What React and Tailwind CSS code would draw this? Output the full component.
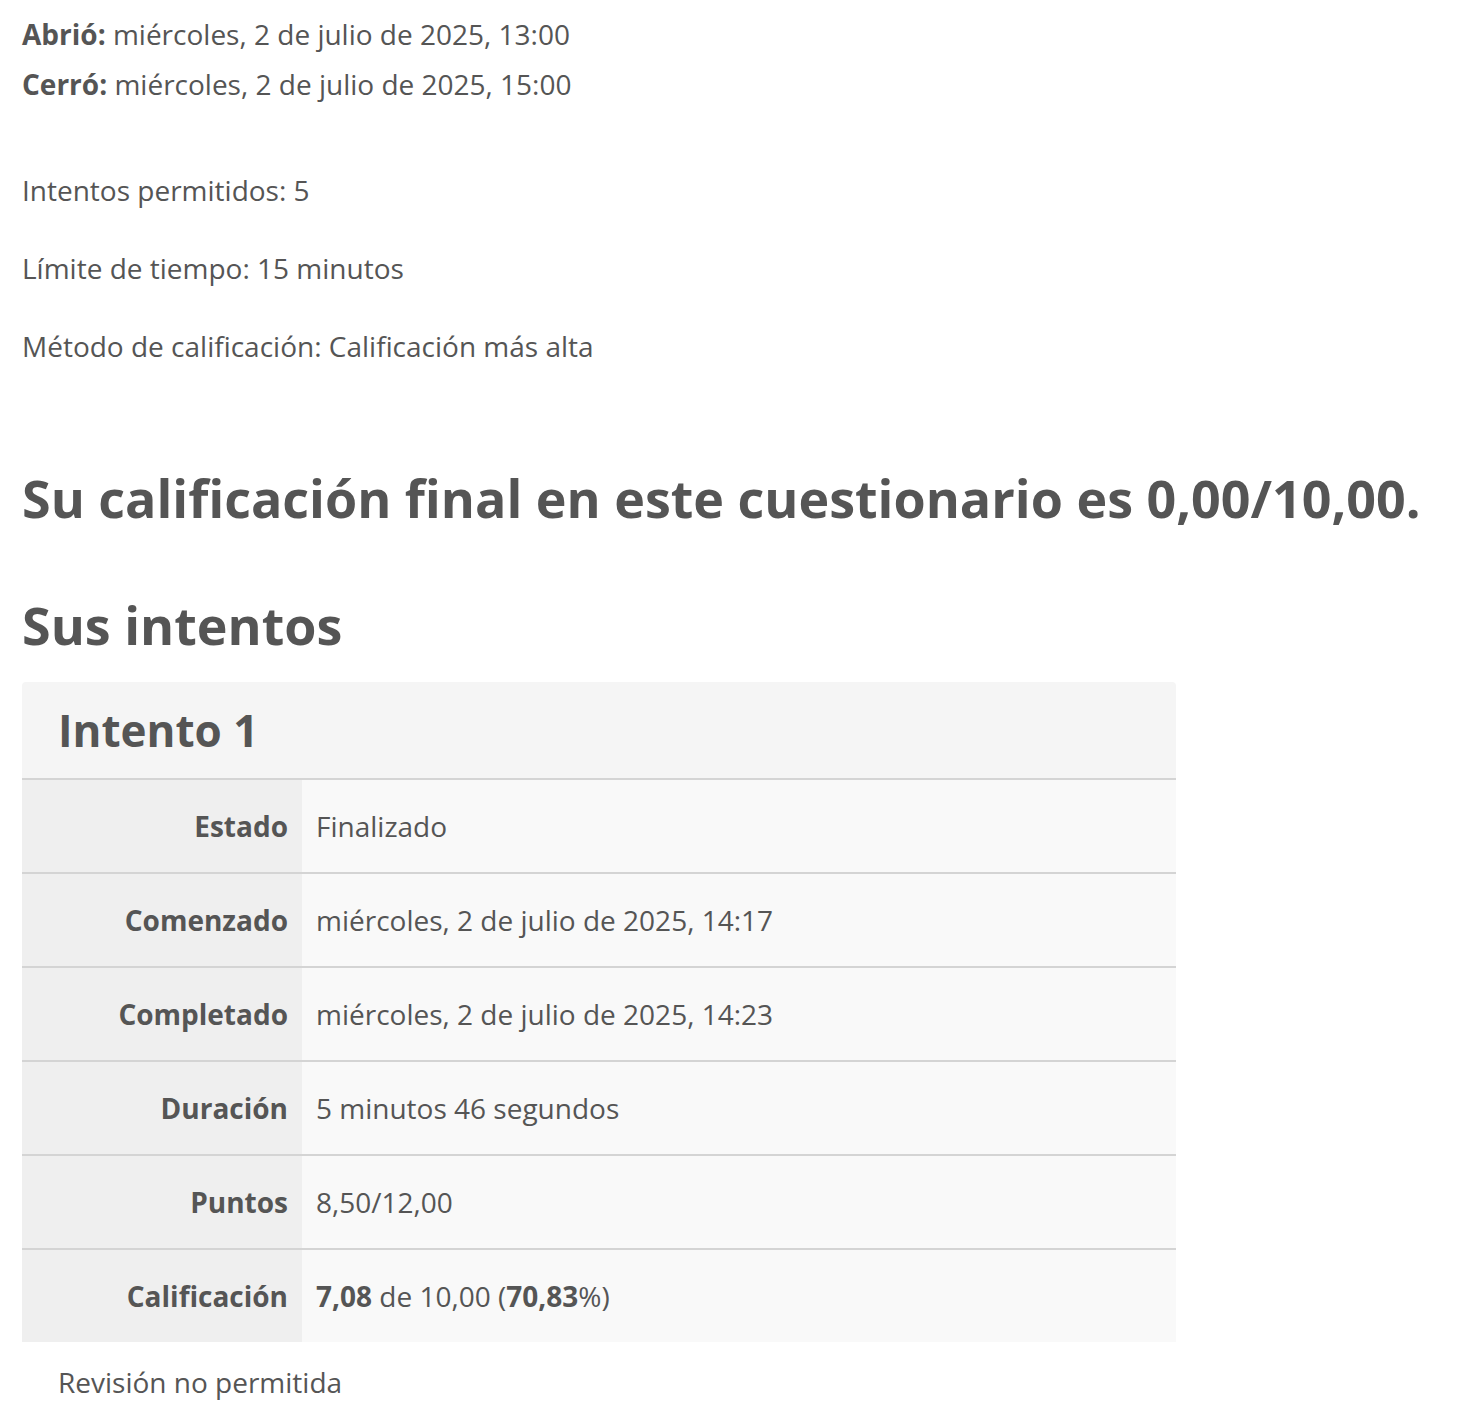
import React from 'react';

const rows = [
  { label: 'Estado', value: 'Finalizado' },
  { label: 'Comenzado', value: 'miércoles, 2 de julio de 2025, 14:17' },
  { label: 'Completado', value: 'miércoles, 2 de julio de 2025, 14:23' },
  { label: 'Duración', value: '5 minutos 46 segundos' },
  { label: 'Puntos', value: '8,50/12,00' },
  {
    label: 'Calificación',
    value: (
      <>
        <b className="font-bold">7,08</b> de 10,00 (<b className="font-bold">70,83</b>%)
      </>
    ),
  },
];

export default function App() {
  return (
    <div
      className="min-h-[1402px] bg-white px-[22px] pt-[14px] text-[28px] leading-[40px] text-[#555555]"
      style={{ fontFamily: '"Open Sans", sans-serif' }}
    >
      {/* Open / close dates */}
      <div className="space-y-[10px]">
        <p>
          <b className="font-bold">Abrió:</b> miércoles, 2 de julio de 2025, 13:00
        </p>
        <p>
          <b className="font-bold">Cerró:</b> miércoles, 2 de julio de 2025, 15:00
        </p>
      </div>

      {/* Quiz info */}
      <div className="mt-[66px] space-y-[38px]">
        <p>Intentos permitidos: 5</p>
        <p>Límite de tiempo: 15 minutos</p>
        <p>Método de calificación: Calificación más alta</p>
      </div>

      <h3 className="mt-[102px] text-[52px] font-bold leading-[60px] whitespace-nowrap">
        Su calificación final en este cuestionario es 0,00/10,00.
      </h3>

      <h3 className="mt-[67px] text-[52px] font-bold leading-[60px]">Sus intentos</h3>

      {/* Attempt card */}
      <div className="mt-[27px] w-[1154px] overflow-hidden rounded-t-[4px] bg-[#f5f5f5]">
        <div className="flex h-[96px] items-center px-[36px]">
          <h4 className="text-[44px] font-bold leading-none">Intento 1</h4>
        </div>
        {rows.map((row) => (
          <div key={row.label} className="flex h-[94px] border-t-2 border-[#d4d4d4]">
            <div className="flex w-[280px] items-center justify-end bg-[#efefef] pr-[14px] font-bold">
              {row.label}
            </div>
            <div className="flex flex-1 items-center bg-[#f9f9f9] pl-[14px]">
              <span>{row.value}</span>
            </div>
          </div>
        ))}
      </div>

      <p className="pl-[36px] pt-[20px]">Revisión no permitida</p>
    </div>
  );
}
